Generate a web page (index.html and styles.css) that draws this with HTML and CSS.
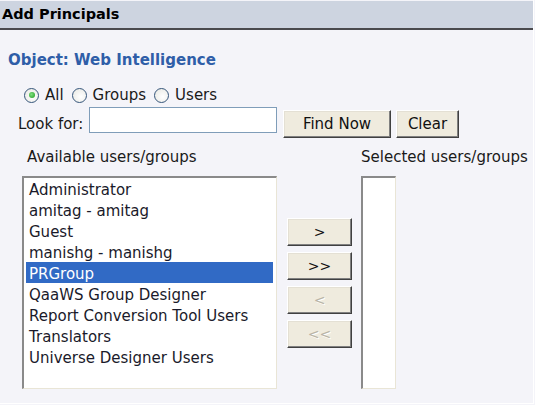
FILE: index.html
```html
<!DOCTYPE html>
<html>
<head>
<meta charset="utf-8">
<link rel="stylesheet" href="styles.css">
</head>
<body>
<div class="page">
  <div class="header">Add Principals</div>
  <div class="content">
    <div class="object">Object: Web Intelligence</div>
    <div class="radios">
      <span class="radio checked"></span><span class="rlabel">All</span>
      <span class="radio"></span><span class="rlabel">Groups</span>
      <span class="radio"></span><span class="rlabel">Users</span>
    </div>
    <div class="search">
      <span class="look">Look for:</span>
      <span class="input"></span>
      <span class="btn find">Find Now</span>
      <span class="btn clear">Clear</span>
    </div>
    <div class="lists">
      <div class="label avail">Available users/groups</div>
      <div class="label sel">Selected users/groups</div>
      <div class="listbox left">
        <div class="item">Administrator</div>
        <div class="item">amitag - amitag</div>
        <div class="item">Guest</div>
        <div class="item">manishg - manishg</div>
        <div class="item selected">PRGroup</div>
        <div class="item">QaaWS Group Designer</div>
        <div class="item">Report Conversion Tool Users</div>
        <div class="item">Translators</div>
        <div class="item">Universe Designer Users</div>
      </div>
      <div class="moves">
        <span class="btn mv">&gt;</span>
        <span class="btn mv">&gt;&gt;</span>
        <span class="btn mv disabled">&lt;</span>
        <span class="btn mv disabled">&lt;&lt;</span>
      </div>
      <div class="listbox right"></div>
    </div>
  </div>
</div>
</body>
</html>
```
FILE: styles.css
```css
html, body {
  margin: 0;
  padding: 0;
  background: #f4f4f9;
}
body {
  font-family: "DejaVu Sans", Verdana, sans-serif;
  font-size: 15px;
  color: #1a1a1a;
}
.page {
  width: 533px;
  height: 403px;
  border-right: 1px solid #ffffff;
  border-bottom: 1px solid #ffffff;
  overflow: hidden;
  box-sizing: content-box;
}
.header {
  margin-top: 1px;
  height: 27px;
  line-height: 27px;
  background: #cdd4e0;
  border-bottom: 2px solid #4a4a4e;
  font-weight: bold;
  font-size: 14.5px;
  padding-left: 2px;
  color: #000;
}
.content {
  padding-left: 8px;
}
.object {
  margin-top: 20px;
  height: 20px;
  line-height: 20px;
  font-weight: bold;
  font-size: 15px;
  color: #2f5ea8;
}
.radios {
  margin-top: 15px;
  height: 20px;
  display: flex;
  align-items: center;
  padding-left: 16px;
}
.radio {
  width: 13px;
  height: 13px;
  border: 1px solid #35557a;
  border-radius: 50%;
  background: radial-gradient(circle at 60% 60%, #ffffff 0%, #e6e6e0 100%);
  position: relative;
  flex: none;
}
.radio.checked::after {
  content: "";
  position: absolute;
  left: 3.5px;
  top: 3.5px;
  width: 6px;
  height: 6px;
  border-radius: 50%;
  background: radial-gradient(circle at 40% 40%, #7fe07f 0%, #1f9a1f 100%);
}
.rlabel {
  margin-left: 6px;
  margin-right: 8px;
}
.search {
  margin-top: 2px;
  display: flex;
  align-items: flex-start;
  padding-left: 10px;
  height: 31px;
}
.look {
  width: 71px;
  margin-top: 6px;
  line-height: 22px;
}
.input {
  width: 186px;
  height: 24px;
  border: 1px solid #7f9db9;
  background: #fff;
}
.btn {
  display: flex;
  align-items: center;
  justify-content: center;
  box-sizing: border-box;
  background: #efebde;
  border: 1px solid;
  border-color: #ffffff #404040 #404040 #ffffff;
  box-shadow: inset -1px -1px 0 #808080, inset 1px 1px 0 #e4e0d4;
  color: #111;
}
.find {
  margin-left: 6px;
  margin-top: 3px;
  width: 108px;
  height: 28px;
}
.clear {
  margin-left: 5px;
  margin-top: 3px;
  width: 63px;
  height: 28px;
}
.lists {
  margin-top: 9px;
  margin-left: 14px;
  display: grid;
  grid-template-columns: 255px 65px 34px;
  grid-template-rows: 29px 213px;
  column-gap: 10px;
}
.label {
  line-height: 21px;
  white-space: nowrap;
}
.avail {
  grid-column: 1 / 3;
  grid-row: 1;
  padding-left: 5px;
}
.sel {
  grid-column: 3;
  grid-row: 1;
  margin-left: -1px;
}
.listbox {
  grid-row: 2;
  box-sizing: border-box;
  background: #fff;
  border-top: 2px solid #8a8a8a;
  border-left: 2px solid #8a8a8a;
  border-right: 1px solid #e9e5d6;
  border-bottom: 1px solid #e9e5d6;
}
.listbox.left {
  grid-column: 1;
  padding: 0 3px 0 2px;
}
.listbox.right {
  grid-column: 3;
  margin-left: -1px;
}
.item {
  height: 19px;
  padding-top: 2px;
  line-height: 21px;
  padding-left: 3px;
  white-space: nowrap;
  color: #1a1a2a;
}
.item.selected {
  background: #316ac5;
  color: #fff;
}
.moves {
  grid-column: 2;
  grid-row: 2;
  padding-top: 42px;
  display: flex;
  flex-direction: column;
  gap: 6px;
}
.mv {
  width: 65px;
  height: 28px;
  font-size: 14px;
}
.mv.disabled {
  color: #b8b4a6;
  text-shadow: 1px 1px 0 #ffffff;
}
```
